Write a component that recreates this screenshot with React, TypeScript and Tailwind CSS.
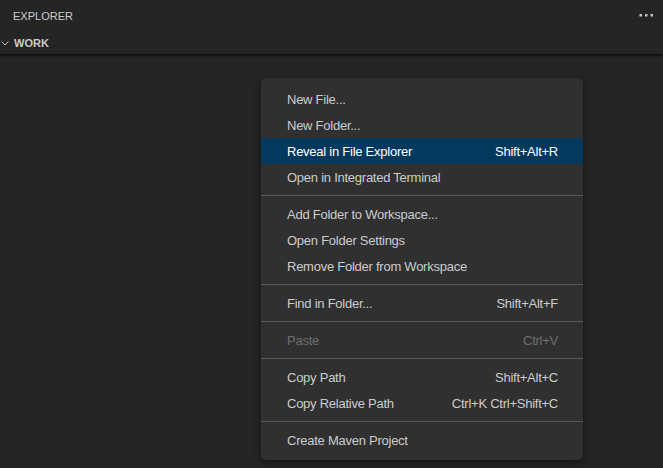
import React from "react";

type Item = { label: string; keys?: string; active?: boolean; disabled?: boolean };

const groups: Item[][] = [
  [
    { label: "New File..." },
    { label: "New Folder..." },
    { label: "Reveal in File Explorer", keys: "Shift+Alt+R", active: true },
    { label: "Open in Integrated Terminal" },
  ],
  [
    { label: "Add Folder to Workspace..." },
    { label: "Open Folder Settings" },
    { label: "Remove Folder from Workspace" },
  ],
  [{ label: "Find in Folder...", keys: "Shift+Alt+F" }],
  [{ label: "Paste", keys: "Ctrl+V", disabled: true }],
  [
    { label: "Copy Path", keys: "Shift+Alt+C" },
    { label: "Copy Relative Path", keys: "Ctrl+K Ctrl+Shift+C" },
  ],
  [{ label: "Create Maven Project" }],
];

function MenuRow({ item }: { item: Item }) {
  const color = item.active
    ? "bg-[#04395e] text-white"
    : item.disabled
      ? "text-[#6e6e6e]"
      : "text-[#cccccc]";
  return (
    <div className={`flex h-[26px] items-center justify-between pl-[26px] pr-[25px] pt-px ${color}`}>
      <span>{item.label}</span>
      {item.keys && <span>{item.keys}</span>}
    </div>
  );
}

export default function App() {
  return (
    <div
      className="h-[468px] w-[663px] overflow-hidden bg-[#252526] text-[13px]"
      style={{ fontFamily: '"Segoe UI", "Liberation Sans", sans-serif' }}
    >
      <div className="relative z-10 shadow-[0_1px_3px_#000]">
        <div className="flex h-[32px] items-center justify-between pl-[13px] pr-[10px] text-[11px] text-[#cccccc]">
          <span>EXPLORER</span>
          <svg width="14" height="4" viewBox="0 0 14 4" className="mb-[3px]">
            <rect x="0.5" y="1" width="2.5" height="2.5" fill="#c5c5c5" />
            <rect x="6" y="1" width="2.5" height="2.5" fill="#c5c5c5" />
            <rect x="11.5" y="1" width="2.5" height="2.5" fill="#c5c5c5" />
          </svg>
        </div>
        <div className="flex h-[22px] items-center gap-[5px] pl-[1px] text-[11px] font-bold text-[#cccccc]">
          <svg width="8" height="6" viewBox="0 0 8 6">
            <path d="M0.5 1.5 L4 5 L7.5 1.5" stroke="#c5c5c5" strokeWidth="1" fill="none" />
          </svg>
          <span>WORK</span>
        </div>
      </div>

      <div className="ml-[261px] mt-[24px] w-[322px] rounded-[5px] bg-[#303031] py-[8px] pb-[7px] tracking-[-0.25px] shadow-[0_2px_8px_rgba(0,0,0,0.5)]">
        {groups.map((group, gi) => (
          <div key={gi}>
            {gi > 0 && <div className="my-[5px] h-px bg-[#5a5a5a]" />}
            {group.map((item) => (
              <MenuRow key={item.label} item={item} />
            ))}
          </div>
        ))}
      </div>
    </div>
  );
}
